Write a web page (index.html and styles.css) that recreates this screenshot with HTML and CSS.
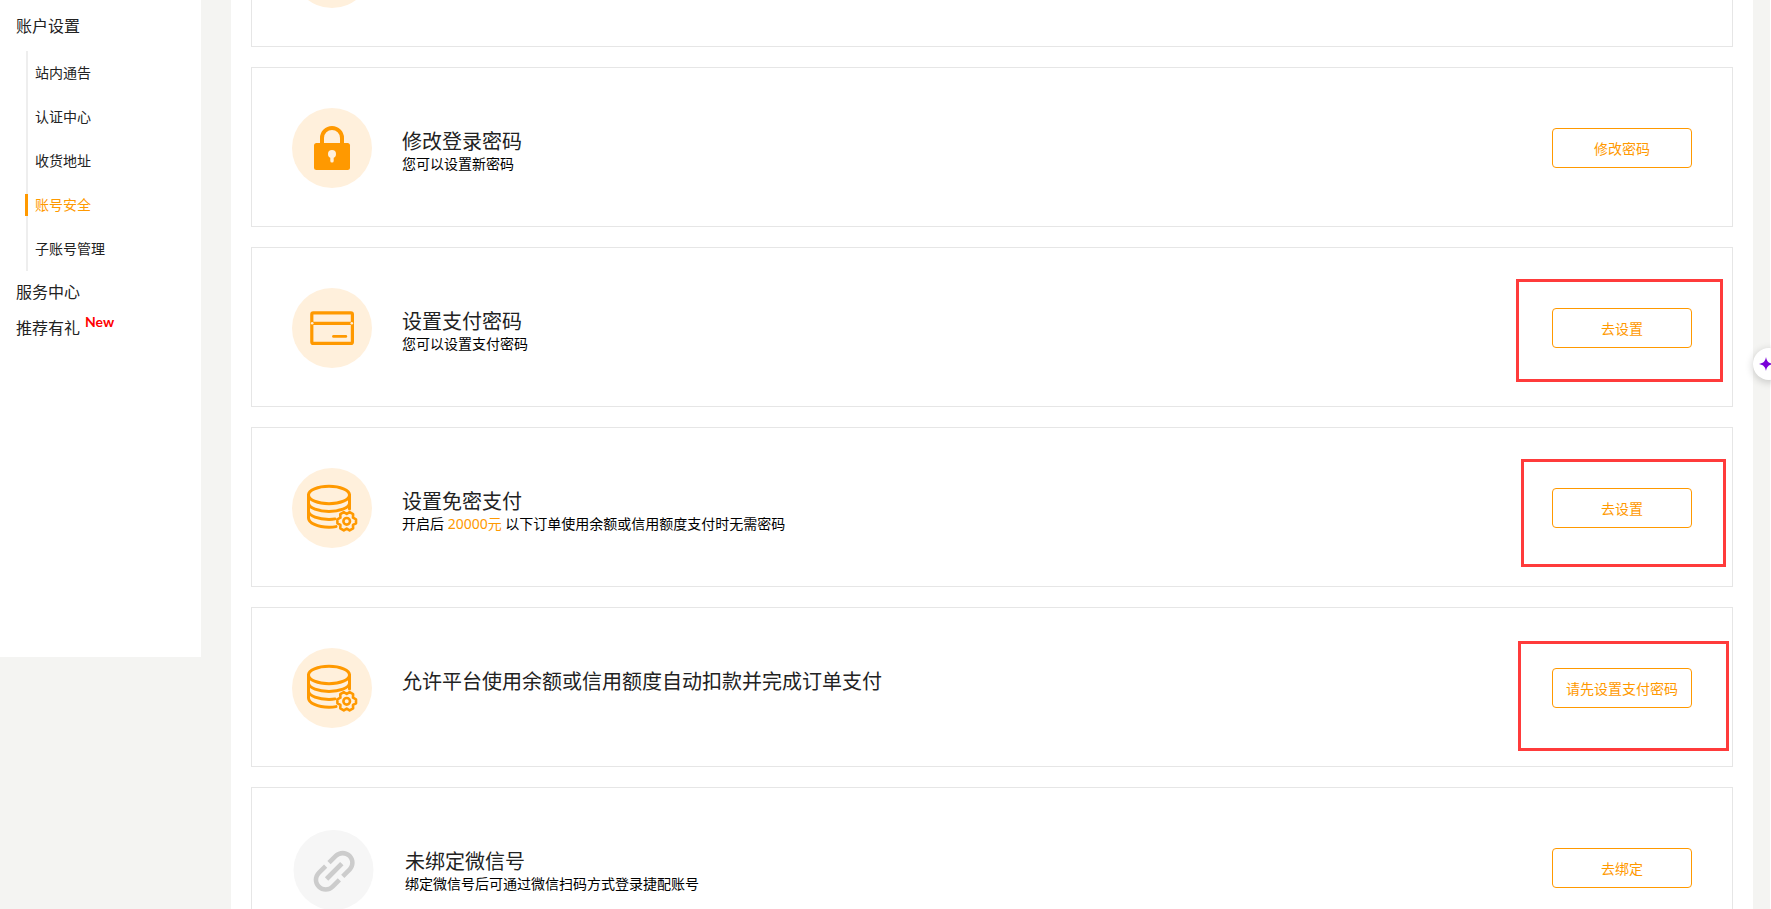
FILE: index.html
```html
<!DOCTYPE html>
<html lang="zh-CN">

<head>
    <meta charset="UTF-8">
    <meta name="viewport" content="width=device-width, initial-scale=1.0">
    <title>账号安全</title>
    <link rel="stylesheet" href="styles.css">
</head>

<body>
    <!-- shared icon -->
    <svg class="sprite" aria-hidden="true">
        <symbol id="icon-coins" viewBox="0 0 80 80">
            <g fill="none" stroke="#ff9900" stroke-width="3" stroke-linejoin="round" stroke-linecap="round">
                <ellipse cx="37" cy="27" rx="20.5" ry="8.7" />
                <path d="M16.5 27v23c0 5 9 9.2 20.5 9.2 3 0 5-.2 7-.6M57.5 27v14" />
                <path d="M16.5 35.5c1 4.500 9.500 7.900 20.500 7.900s19.500-3.400 20.500-7.900" />
                <path d="M16.5 43.5c1 4.500 9.500 7.900 20.500 7.900 2 0 4-.1 6-.5" />
                <path stroke-width="2.6" d="M64 51.300v4l-3 1.600.1 3.500-3.500 2-2.900-1.800-2.900 1.800-3.500-2 .1-3.500-3-1.600v-4l3-1.600-.1-3.500 3.500-2 2.900 1.800 2.900-1.800 3.500 2-.1 3.500z" />
                <circle stroke-width="2.6" cx="54.700" cy="53.300" r="3.300" />
            </g>
        </symbol>
    </svg>

    <div class="page">
        <nav class="sidebar">
            <a href="#" class="menu-title">账户设置</a>
            <ul class="submenu">
                <li><a href="#">站内通告</a></li>
                <li><a href="#">认证中心</a></li>
                <li><a href="#">收货地址</a></li>
                <li class="active"><a href="#">账号安全</a></li>
                <li><a href="#">子账号管理</a></li>
            </ul>
            <a href="#" class="menu-title">服务中心</a>
            <a href="#" class="menu-title">推荐有礼<span class="new-tag">New</span></a>
        </nav>

        <main class="main">
            <div class="card-list">
                <section class="card">
                    <div class="icon"></div>
                </section>

                <section class="card">
                    <div class="icon">
                        <svg viewBox="0 0 80 80">
                            <path d="M30 37v-7a10 10 0 0 1 20 0v7" fill="none" stroke="#ff9900" stroke-width="4" />
                            <rect x="22" y="35" width="36" height="27" rx="2.5" fill="#ff9900" />
                            <circle cx="40" cy="46" r="4" fill="#fff0dc" />
                            <rect x="38.3" y="47" width="3.4" height="7.5" rx="1.5" fill="#fff0dc" />
                        </svg>
                    </div>
                    <div class="text">
                        <h2>修改登录密码</h2>
                        <p>您可以设置新密码</p>
                    </div>
                    <button type="button" class="btn">修改密码</button>
                </section>

                <section class="card">
                    <div class="icon">
                        <svg viewBox="0 0 80 80">
                            <g fill="none" stroke="#ff9900" stroke-width="3.2">
                                <rect x="19.8" y="24.9" width="40.6" height="30.5" rx="1.5" />
                                <path d="M20 35.300h40" />
                                <path d="M41.5 48.400h12.300" stroke-width="2.8" stroke-linecap="round" />
                            </g>
                            <circle cx="20.2" cy="35.3" r="1.3" fill="#fff0dc" />
                            <circle cx="59.8" cy="35.3" r="1.3" fill="#fff0dc" />
                        </svg>
                    </div>
                    <div class="text">
                        <h2>设置支付密码</h2>
                        <p>您可以设置支付密码</p>
                    </div>
                    <button type="button" class="btn">去设置</button>
                    <div class="mark mark-pay"></div>
                </section>

                <section class="card">
                    <div class="icon">
                        <svg><use href="#icon-coins" /></svg>
                    </div>
                    <div class="text">
                        <h2>设置免密支付</h2>
                        <p>开启后 <span class="amount">20000元</span> 以下订单使用余额或信用额度支付时无需密码</p>
                    </div>
                    <button type="button" class="btn">去设置</button>
                    <div class="mark mark-free"></div>
                </section>

                <section class="card">
                    <div class="icon">
                        <svg><use href="#icon-coins" /></svg>
                    </div>
                    <div class="text">
                        <h2>允许平台使用余额或信用额度自动扣款并完成订单支付</h2>
                    </div>
                    <button type="button" class="btn">请先设置支付密码</button>
                    <div class="mark mark-auto"></div>
                </section>

                <section class="card">
                    <svg class="icon-wechat" viewBox="0 0 83 84">
                        <circle cx="41.5" cy="42" r="40" fill="#f6f6f6" />
                        <path transform="translate(42.2 43.3) rotate(-45) scale(2.4) translate(-12 -12)" fill="#cccccc" d="M3.9 12c0-1.71 1.39-3.1 3.1-3.1h4V7H7c-2.76 0-5 2.24-5 5s2.24 5 5 5h4v-1.9H7c-1.71 0-3.1-1.39-3.1-3.1zM7.5 13h9v-2h-9v2zM17 7h-4v1.9h4c1.71 0 3.1 1.39 3.1 3.1s-1.39 3.1-3.1 3.1h-4V17h4c2.76 0 5-2.24 5-5s-2.24-5-5-5z" />
                    </svg>
                    <div class="text">
                        <h2>未绑定微信号</h2>
                        <p>绑定微信号后可通过微信扫码方式登录捷配账号</p>
                    </div>
                    <button type="button" class="btn">去绑定</button>
                </section>
            </div>
        </main>
    </div>

    <button type="button" class="assistant" aria-label="AI">
        <svg viewBox="0 0 14 14">
            <path d="M7 0c.8 4 2.200 6 7 7-4.800 1-6.200 3-7 7-.8-4-2.200-6-7-7 4.800-1 6.200-3 7-7z" fill="#7a00d8" />
        </svg>
    </button>
</body>

</html>
```

FILE: styles.css
```css
* {
    box-sizing: border-box;
}

body {
    margin: 0;
    background: #f4f4f2;
    color: #222;
    font-family: "Noto Sans", "Noto Sans CJK SC", sans-serif;
    font-size: 14px;
}

h2,
p,
ul {
    margin: 0;
    padding: 0;
}

a {
    color: inherit;
    text-decoration: none;
}

.sprite {
    display: none;
}

.page {
    display: flex;
    align-items: flex-start;
    gap: 30px;
    height: 100vh;
    padding-right: 17px;
    border-right: 1px solid #fff;
    overflow: hidden;
}

/* sidebar */
.sidebar {
    flex: none;
    width: 201px;
    padding: 8px 16px 311px;
    background: #fff;
}

.menu-title {
    display: block;
    font-size: 16px;
    line-height: 36px;
}

.submenu {
    margin: 7px 0 3px 10px;
    border-left: 2px solid #eee;
    list-style: none;
}

.submenu li {
    display: flex;
    align-items: center;
    height: 44px;
}

.submenu a {
    padding-left: 7px;
    line-height: 22px;
}

.submenu .active a {
    margin-left: -3px;
    border-left: 3px solid #ff9900;
    color: #ff9900;
}

.new-tag {
    margin-left: 5px;
    color: #ff0000;
    font-family: Lato, sans-serif;
    font-size: 14px;
    font-weight: bold;
    line-height: 1;
    vertical-align: 7px;
}

/* content */
.main {
    flex: 1;
    min-width: 0;
    padding: 0 20px;
    background: #fff;
}

/* the list is scrolled past the top of the window */
.card-list {
    display: flex;
    flex-direction: column;
    gap: 20px;
    margin-top: -113px;
}

.card {
    position: relative;
    display: flex;
    align-items: flex-start;
    gap: 30px;
    min-height: 160px;
    padding: 40px 40px 38px;
    border: 1px solid #e6e6e6;
}

.icon {
    flex: none;
    width: 80px;
    height: 80px;
    border-radius: 50%;
    background: #fff0dc;
}

.icon svg {
    display: block;
    width: 80px;
    height: 80px;
}

.icon-wechat {
    flex: none;
    width: 83px;
    height: 84px;
}

.text {
    flex: 1;
    padding-top: 21px;
}

.text h2 {
    font-size: 20px;
    font-weight: normal;
    line-height: 26px;
}

.text p {
    color: #000;
    line-height: 18px;
}

.text .amount {
    color: #ff9900;
}

.btn {
    width: 140px;
    height: 40px;
    margin-top: 20px;
    padding: 0;
    border: 1px solid #ff9900;
    border-radius: 4px;
    background: #fff;
    color: #ff9900;
    font-family: inherit;
    font-size: 14px;
    cursor: pointer;
}

/* red frames over the buttons */
.mark {
    position: absolute;
    border: 3px solid #ff3b3b;
    pointer-events: none;
}

.mark-pay {
    top: 31px;
    right: 9px;
    width: 207px;
    height: 103px;
}

.mark-free {
    top: 31px;
    right: 6px;
    width: 205px;
    height: 108px;
}

.mark-auto {
    top: 33px;
    right: 3px;
    width: 211px;
    height: 110px;
}

.assistant {
    position: fixed;
    top: 348px;
    right: -14px;
    width: 32px;
    height: 32px;
    padding: 0 0 0 6px;
    border: none;
    border-radius: 50%;
    background: #fff;
    box-shadow: 0 2px 8px rgba(0, 0, 0, 0.2);
    cursor: pointer;
}

.assistant svg {
    display: block;
    width: 14px;
    height: 14px;
}
```
